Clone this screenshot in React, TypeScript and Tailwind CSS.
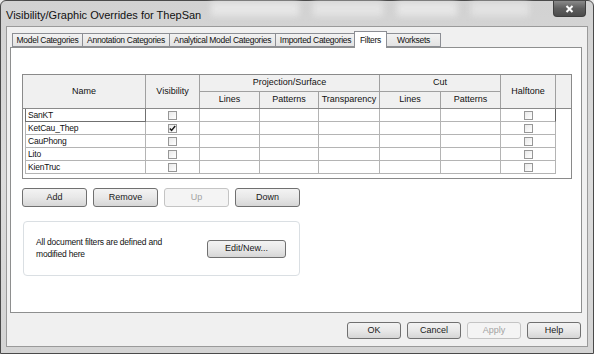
import React from "react"

const font = { fontFamily: '"Liberation Sans", Arial, sans-serif' }

const rows: [string, boolean][] = [
  ["SanKT", false],
  ["KetCau_Thep", true],
  ["CauPhong", false],
  ["Lito", false],
  ["KienTruc", false],
]

const tabs = [
  { label: "Model Categories", w: "w-[71px]" },
  { label: "Annotation Categories", w: "w-[88px]" },
  { label: "Analytical Model Categories", w: "w-[107px]" },
  { label: "Imported Categories", w: "w-[81px]" },
  { label: "Filters", w: "w-[33px]", active: true },
  { label: "Worksets", w: "w-[55px]" },
]

function Check({ checked }: { checked?: boolean }) {
  return (
    <span className="w-[9px] h-[9px] border border-[#979797] bg-gradient-to-br from-[#e9e9e9] to-white flex items-center justify-center">
      {checked && (
        <svg width="7" height="7" viewBox="0 0 7 7">
          <path d="M0.8 3.4 L2.6 5.4 L6.2 1.0" stroke="#1a1a1a" strokeWidth="1.5" fill="none" />
        </svg>
      )}
    </span>
  )
}

function Btn({ label, w, h = "h-[19px]", disabled }: { label: string; w: string; h?: string; disabled?: boolean }) {
  return (
    <div
      className={`${w} ${h} rounded-[3px] border flex items-center justify-center text-[9px] ${
        disabled
          ? "border-[#c4c4c4] bg-[#f4f4f4] text-[#a3a3a3]"
          : "border-[#707070] bg-gradient-to-b from-[#f3f3f3] via-[#e8e8e8] to-[#d6d6d6] text-[#1a1a1a]"
      }`}
    >
      {label}
    </div>
  )
}

export default function App() {
  return (
    <div style={font} className="w-[594px] h-[354px] overflow-hidden bg-[#e9e9e9]">
      <div className="w-[594px] h-[354px] border border-[#4a4a4a] rounded-t-[6px] bg-gradient-to-b from-[#d2d2d2] via-[#dcdcdc] to-[#d4d4d4] flex flex-col">
        {/* title bar */}
        <div className="h-[25px] flex items-start relative">
          <div className="pl-[5px] pt-[6px] text-[11px] text-[#111] whitespace-nowrap">
            Visibility/Graphic Overrides for ThepSan
          </div>
          <div className="flex gap-[14px] ml-[10px] mt-[1px] blur-[3px]">
            <div className="w-[88px] h-[14px] bg-[#e6e6e6]" />
            <div className="w-[70px] h-[14px] bg-[#e4e4e4]" />
            <div className="w-[60px] h-[14px] bg-[#e6e6e6]" />
            <div className="w-[58px] h-[14px] bg-[#e2e2e2]" />
          </div>
          <div className="absolute right-[7px] top-0 w-[33px] h-[16px] rounded-b-[4px] border border-[#3e3e3e] border-t-0 bg-gradient-to-b from-[#8a8a8a] via-[#5e5e5e] to-[#4c4c4c] flex items-center justify-center">
            <svg width="9" height="8" viewBox="0 0 9 8">
              <path d="M1.5 1 L7.5 7 M7.5 1 L1.5 7" stroke="white" strokeWidth="2" />
            </svg>
          </div>
        </div>

        {/* client */}
        <div className="flex-1 mx-[5px] mb-[6px] border border-[#9a9a9a] bg-[#f0f0f0] flex flex-col pl-[3px] pr-[5px] pt-[4px]">
          <div className="h-[16px] flex pl-[2px] items-end relative z-10">
            {tabs.map((t) => (
              <div
                key={t.label}
                className={`${t.w} shrink-0 flex items-center justify-center text-[8.5px] tracking-[-0.3px] text-[#111] whitespace-nowrap border border-[#8c8e94] ${
                  t.active
                    ? "h-[17px] -mb-px bg-white border-b-0 -mx-px relative z-10"
                    : "h-[14px] bg-gradient-to-b from-[#f2f2f2] to-[#e3e3e3] -mr-px"
                }`}
              >
                {t.label}
              </div>
            ))}
          </div>

          <div className="h-[266px] bg-white border border-[#8e8f8f] pl-[11px] pt-[26px]">
            {/* filter table */}
            <div className="w-[550px] h-[105px] border border-[#8a8a8a] bg-white text-[9px] text-[#111]">
              <div className="h-[34px] flex bg-[#f0f0f0] border-b border-[#8a8a8a]">
                <div className="w-[123px] border-r border-[#a0a0a0] flex items-center justify-center">Name</div>
                <div className="w-[54px] border-r border-[#a0a0a0] flex items-center justify-center">Visibility</div>
                <div className="w-[180px] flex flex-col border-r border-[#a0a0a0]">
                  <div className="h-[17px] border-b border-[#a0a0a0] flex items-center justify-center">Projection/Surface</div>
                  <div className="flex-1 flex">
                    <div className="w-[60px] border-r border-[#a0a0a0] flex items-center justify-center">Lines</div>
                    <div className="w-[59px] border-r border-[#a0a0a0] flex items-center justify-center">Patterns</div>
                    <div className="flex-1 flex items-center justify-center">Transparency</div>
                  </div>
                </div>
                <div className="w-[121px] flex flex-col border-r border-[#a0a0a0]">
                  <div className="h-[17px] border-b border-[#a0a0a0] flex items-center justify-center">Cut</div>
                  <div className="flex-1 flex">
                    <div className="w-[61px] border-r border-[#a0a0a0] flex items-center justify-center">Lines</div>
                    <div className="flex-1 flex items-center justify-center">Patterns</div>
                  </div>
                </div>
                <div className="w-[55px] border-r border-[#a0a0a0] flex items-center justify-center">Halftone</div>
                <div className="flex-1" />
              </div>
              {rows.map(([name, vis], i) => (
                <div key={name} className="h-[13px] flex">
                  <div className="w-[2px]" />
                  <div
                    className={`w-[121px] border-l border-r border-b pl-[2px] flex items-center leading-none text-[8.5px] tracking-[-0.2px] ${
                      i === 0 ? "border-[#707070]" : "border-[#b4b4b4]"
                    }`}
                  >
                    {name}
                  </div>
                  <div className="w-[54px] border-r border-b border-[#b4b4b4] flex items-center justify-center">
                    <Check checked={vis} />
                  </div>
                  <div className="w-[60px] border-r border-b border-[#b4b4b4]" />
                  <div className="w-[59px] border-r border-b border-[#b4b4b4]" />
                  <div className="w-[61px] border-r border-b border-[#b4b4b4]" />
                  <div className="w-[61px] border-r border-b border-[#b4b4b4]" />
                  <div className="w-[60px] border-r border-b border-[#b4b4b4]" />
                  <div
                    className={`w-[55px] border-r border-b flex items-center justify-center ${
                      i === 0 ? "border-r-[#606060] border-b-[#b4b4b4]" : "border-[#b4b4b4]"
                    }`}
                  >
                    <Check />
                  </div>
                </div>
              ))}
            </div>

            <div className="flex gap-[6px] mt-[9px]">
              <Btn label="Add" w="w-[65px]" />
              <Btn label="Remove" w="w-[65px]" />
              <Btn label="Up" w="w-[65px]" disabled />
              <Btn label="Down" w="w-[65px]" />
            </div>

            <div className="w-[277px] h-[55px] ml-[1px] mt-[14px] border border-[#dadfe3] rounded-[4px] flex items-center pl-[12px] pr-[13px] justify-between">
              <div className="text-[8.5px] tracking-[-0.2px] leading-[12px] text-[#111] mt-[-2px]">
                All document filters are defined and
                <br />
                modified here
              </div>
              <Btn label="Edit/New..." w="w-[79px]" h="h-[18px]" />
            </div>
          </div>

          <div className="flex justify-end gap-[6px] mt-[9px] pr-[1px]">
            <Btn label="OK" w="w-[54px]" h="h-[17px]" />
            <Btn label="Cancel" w="w-[54px]" h="h-[17px]" />
            <Btn label="Apply" w="w-[54px]" h="h-[17px]" disabled />
            <Btn label="Help" w="w-[54px]" h="h-[17px]" />
          </div>
        </div>
      </div>
    </div>
  )
}
